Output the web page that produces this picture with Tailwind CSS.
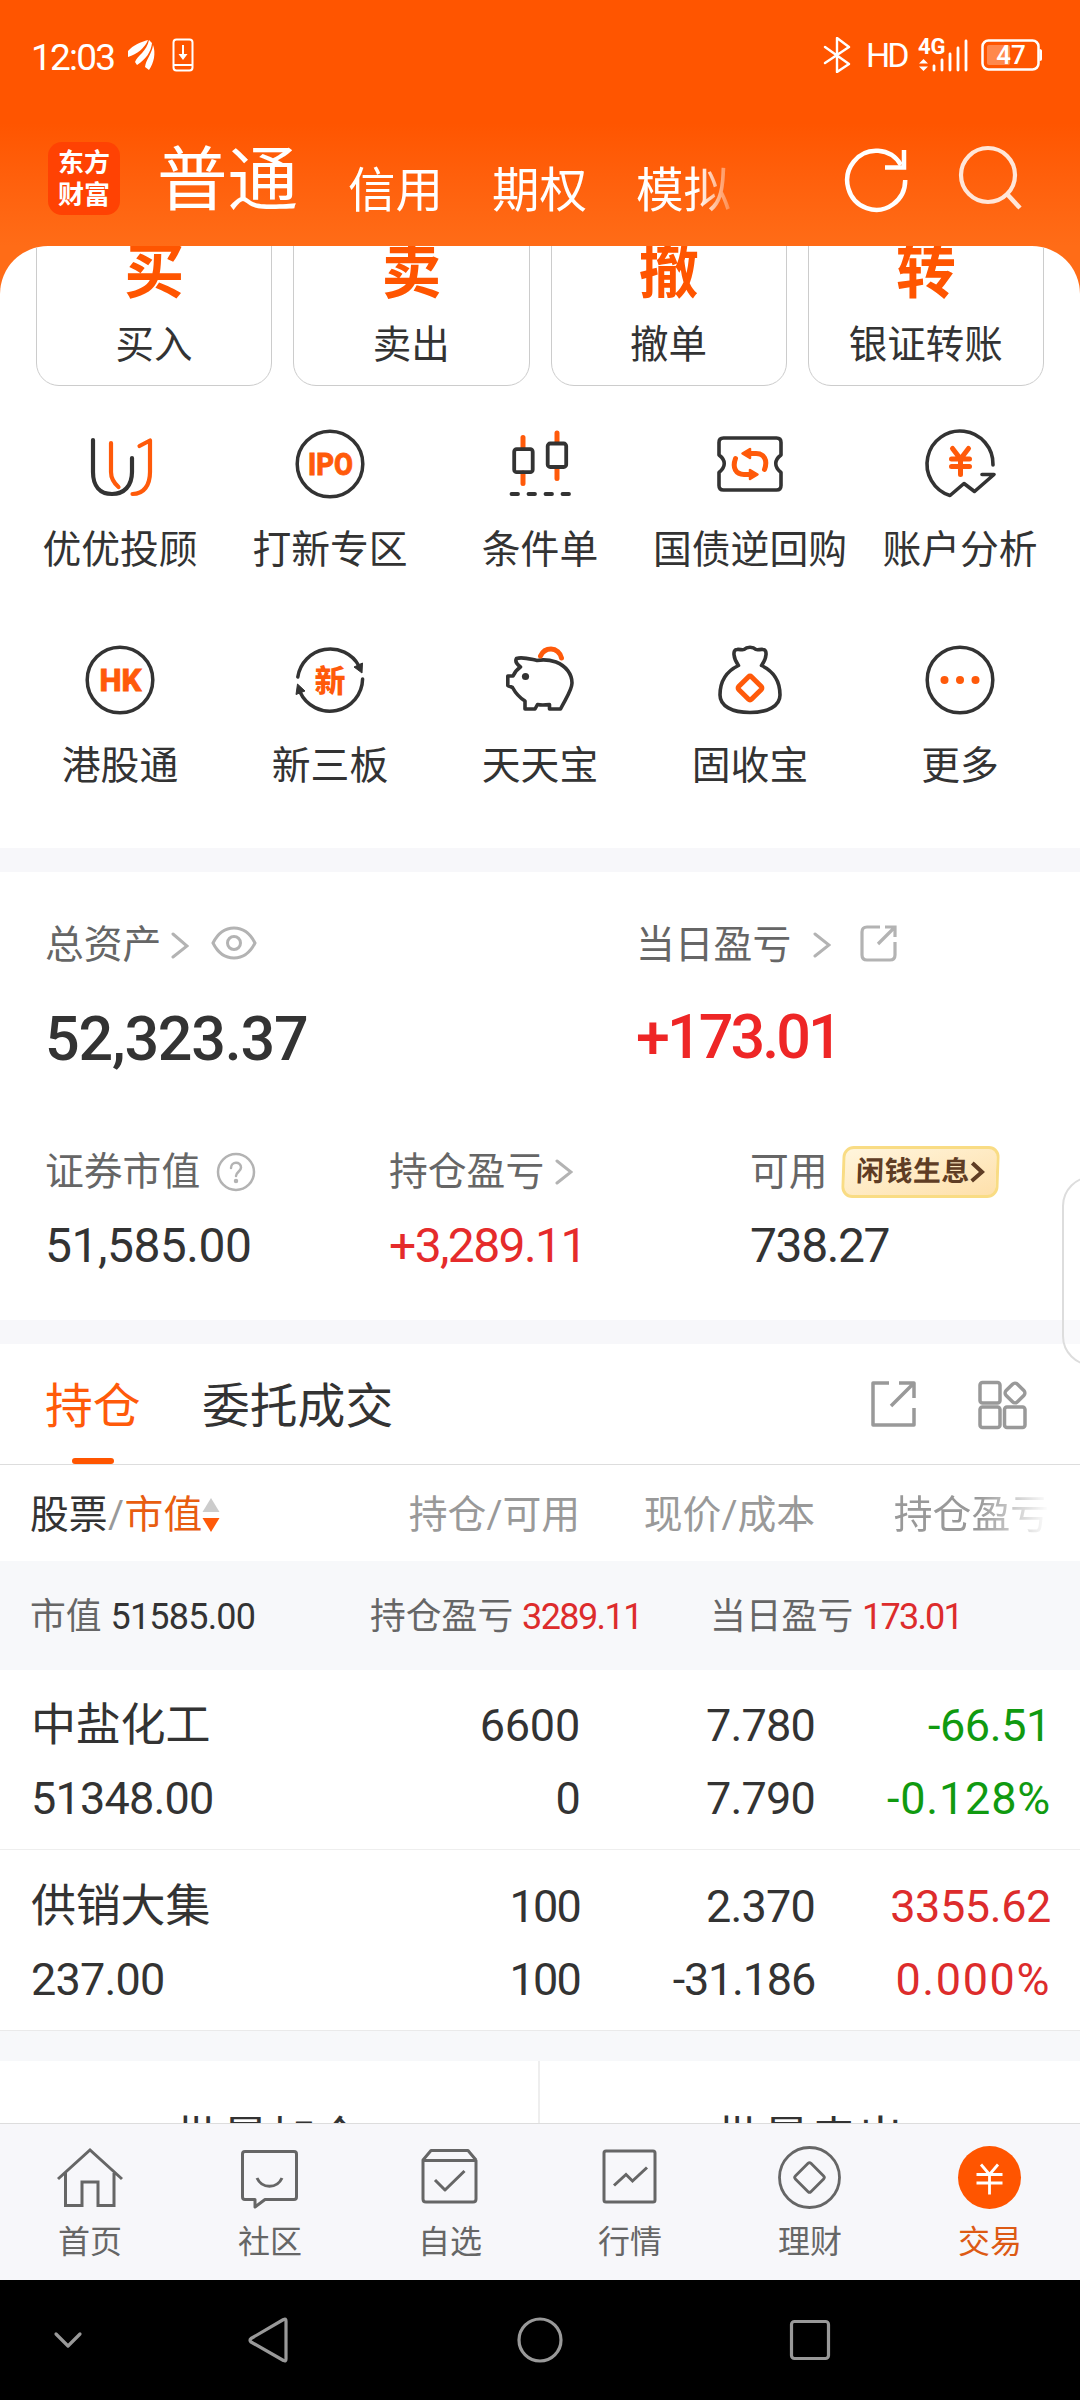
<!DOCTYPE html>
<html lang="zh-CN">
  <head>
    <meta charset="utf-8" />
    <meta name="viewport" content="width=device-width" />
    <title>东方财富 - 交易</title>
    <script src="https://cdn.jsdelivr.net/npm/@tailwindcss/browser@4"></script>
    <style>
      body {
        font-family: Roboto, "Noto Sans CJK SC", sans-serif;
      }
      svg {
        flex-shrink: 0;
      }
    </style>
  </head>
  <body class="bg-white">
    <div
      class="relative w-[1080px] h-[2400px] overflow-hidden flex flex-col text-[#333] whitespace-nowrap"
    >
      <!-- header: status bar + account tabs -->
      <header
        class="h-[246px] shrink-0 bg-linear-to-b from-[#ff5500] from-50% to-[#ff6c17] to-100% text-white"
      >
        <div class="h-[114px] flex items-center pl-[31px] pr-[38px]">
          <div class="w-[97px] text-[37px] leading-none tracking-[-1.8px]">12:03</div>
          <svg class="-mt-1" width="28" height="32" viewBox="0 0 28 32" fill="#fff">
            <path d="M0 12C5 6 13 3 20 1C17 9 9 15 0 18Z" />
            <path d="M7 23C9 17 19 12 21 1L24 4C23 13 18 20 9 26Z" />
            <path d="M17 28C18 20 24 15 25 6C28 14 26 24 21 31Z" />
          </svg>
          <svg class="ml-[16px] -mt-1" width="22" height="34" viewBox="0 0 22 34" fill="none" stroke="#fff">
            <rect x="1.5" y="1.5" width="19" height="31" rx="3" stroke-width="2" />
            <path d="M2 27H20" stroke-width="2" />
            <path d="M11 7V17" stroke-width="2" />
            <path d="M6.500 16H15.500L11 22Z" fill="#fff" stroke="none" />
          </svg>
          <div class="flex-1"></div>
          <svg class="-mt-1" width="28" height="36" viewBox="0 0 28 36" fill="none" stroke="#fff" stroke-width="2.400" stroke-linejoin="round" stroke-linecap="round">
            <path d="M2 10L26 27L14 35V1L26 10L2 26" />
          </svg>
          <div class="-mt-1 ml-[15px] w-[52px] text-[34px] leading-none tracking-[-3px]">HD</div>
          <div class="relative -mt-1 w-[50px] h-[36px] mr-[13px]">
            <span class="absolute left-0 -top-[1px] text-[22px] leading-none font-bold">4G</span>
            <svg class="absolute inset-0" width="50" height="36" viewBox="0 0 50 36" fill="none" stroke="#fff" stroke-width="3" stroke-linecap="round">
              <path d="M1 26.500L5.500 22L10 26.500ZM1 29.500L5.500 34L10 29.500Z" fill="#fff" stroke="none" />
              <path d="M16 29V33M24 23V33M32 17V33M40 11V33M48 4V33" stroke-width="2.800" />
            </svg>
          </div>
          <div class="relative -mt-1 w-[61px] h-[32px]">
            <svg class="absolute inset-0" width="61" height="32" viewBox="0 0 61 32" fill="none">
              <rect x="1.500" y="1.500" width="56" height="29" rx="6" stroke="#fff" stroke-width="2.500" />
              <rect x="6" y="6" width="23" height="20" rx="2" fill="#fff" fill-opacity=".3" />
              <path d="M58.500 10V22C60.500 22 61 21 61 20V12C61 11 60.500 10 58.500 10Z" fill="#fff" />
            </svg>
            <span class="absolute inset-0 pr-[1px] text-center text-[26px] leading-[33px] font-medium">47</span>
          </div>
        </div>
        <div class="h-[132px] flex items-start pl-[48px]">
          <div
            class="mt-[28px] w-[72px] h-[73px] rounded-[14px] bg-[#ff4203] pt-[3px] text-center text-[26px] leading-[32px] font-bold"
            style="font-family: 'Noto Sans CJK SC', sans-serif"
          >
            东方<br />财富
          </div>
          <div class="ml-[37px] mt-[31px] w-[141px] text-[70.500px] leading-[72px]">普通</div>
          <div
            class="ml-[50px] mt-[49px] w-[393px] flex gap-[49px] text-[47.500px] leading-[56px] mask-r-from-89% mask-r-to-100%"
          >
            <span>信用</span><span>期权</span><span>模拟</span>
          </div>
          <svg class="ml-[103px] mt-[29px]" width="66" height="72" viewBox="0 0 66 72" fill="none" stroke="#fff" stroke-width="4.500">
            <path d="M61.200 37A29 29.500 0 1 1 57 22" />
            <path d="M60 7V24.500H41" />
          </svg>
          <svg class="ml-[47px] mt-[30px]" width="66" height="68" viewBox="0 0 66 68" fill="none" stroke="#ffe6d9" stroke-width="4.200">
            <circle cx="31" cy="31" r="27" />
            <path d="M50 50L63 64" stroke-width="4.500" />
          </svg>
        </div>
      </header>

      <main class="h-[1877px] shrink-0 overflow-hidden bg-[#ff6c17] flex flex-col">
        <!-- scrolled sheet -->
        <section class="h-[602px] shrink-0 bg-white rounded-t-[48px] overflow-hidden">
          <div class="h-[141px] grid grid-cols-4 gap-[21px] pl-[36px] pr-[36px] text-center">
            <div class="h-[190px] -mt-[50px] border border-[#ccc] rounded-[23px] pt-[38px]">
              <div class="text-[60px] leading-[76px] font-bold text-[#ff5500]">买</div>
              <div class="mt-[7px] text-[38.500px] leading-[54px]">买入</div>
            </div>
            <div class="h-[190px] -mt-[50px] border border-[#ccc] rounded-[23px] pt-[38px]">
              <div class="text-[60px] leading-[76px] font-bold text-[#ff5500]">卖</div>
              <div class="mt-[7px] text-[38.500px] leading-[54px]">卖出</div>
            </div>
            <div class="h-[190px] -mt-[50px] border border-[#ccc] rounded-[23px] pt-[38px]">
              <div class="text-[60px] leading-[76px] font-bold text-[#ff5500]">撤</div>
              <div class="mt-[7px] text-[38.500px] leading-[54px]">撤单</div>
            </div>
            <div class="h-[190px] -mt-[50px] border border-[#ccc] rounded-[23px] pt-[38px]">
              <div class="text-[60px] leading-[76px] font-bold text-[#ff5500]">转</div>
              <div class="mt-[7px] text-[38.500px] leading-[54px]">银证转账</div>
            </div>
          </div>

          <!-- shortcuts -->
          <div class="mt-[37px] px-[15px] grid grid-cols-5 auto-rows-[216px] text-[38.800px] leading-[54px]">
            <div class="flex flex-col items-center gap-[19px]">
              <svg width="80" height="80" viewBox="0 0 80 80" fill="none" stroke-width="4.200" stroke-linecap="round" stroke-linejoin="round">
                <path stroke="#333" d="M13 16V48C13 62 20 70 32 70S52 62 52 48V34" />
                <path stroke="#ff5a0a" d="M31 19V48C31 55 34 59 38.500 63M59.500 22L70 16.500V48C70 61 64 70 52.500 70" />
              </svg>
              <span>优优投顾</span>
            </div>
            <div class="flex flex-col items-center gap-[19px]">
              <svg width="80" height="80" viewBox="0 0 80 80" fill="none">
                <circle cx="40" cy="40" r="32.800" stroke="#333" stroke-width="3.500" />
                <text x="40.500" y="51.300" text-anchor="middle" font-size="31" font-weight="800" fill="#ff5a0a" textLength="45" lengthAdjust="spacingAndGlyphs" stroke="#ff5a0a" stroke-width=".8">IPO</text>
              </svg>
              <span>打新专区</span>
            </div>
            <div class="flex flex-col items-center gap-[19px]">
              <svg width="80" height="80" viewBox="0 0 80 80" fill="none" stroke="#333" stroke-width="3.800" stroke-linecap="round">
                <path stroke="#ff5a0a" stroke-width="5" d="M23 13.500V24M23 49V59.500M57 9V18M57 45V54.500" />
                <rect x="14.200" y="25.200" width="18.500" height="23" rx="2.500" />
                <rect x="47.700" y="19.500" width="18.500" height="23.500" rx="2.500" />
                <path d="M11.500 70H18M28.500 70H35M45.500 70H52M62.500 70H69" />
              </svg>
              <span>条件单</span>
            </div>
            <div class="flex flex-col items-center gap-[19px]">
              <svg width="80" height="80" viewBox="0 0 80 80" fill="none" stroke="#333" stroke-width="3.600" stroke-linejoin="round">
                <path d="M13.500 14H66.500Q71 14 71 18.500V31C64 36 64 43 71 48.500V61.500Q71 66 66.500 66H13.500Q9 66 9 61.500V48.500C16 43 16 36 9 31V18.500Q9 14 13.500 14Z" />
                <g stroke="#ff5a0a" stroke-width="5" stroke-linecap="round">
                  <path d="M54.500 45.500C58 36 54 29.500 46 29.500H40M25.500 34.500C22 44 26 50.500 34 50.500H40" />
                  <path d="M32.500 29.500L40 25V34ZM47.500 50.500L40 46V55Z" fill="#ff5a0a" stroke-width="2.500" />
                </g>
              </svg>
              <span>国债逆回购</span>
            </div>
            <div class="flex flex-col items-center gap-[19px]">
              <svg width="80" height="80" viewBox="0 0 80 80" fill="none" stroke="#333" stroke-width="3.600" stroke-linecap="round" stroke-linejoin="round">
                <path d="M73 41A33 33 0 1 0 30 71.500L44 59.500L54.500 67.500L74 50.500H62" />
                <path stroke="#ff5a0a" stroke-width="5" d="M32.500 24.500L40.500 35L48.500 24.500M31.500 35H49.500M31.500 42.500H49.500M40.500 35V50.500" />
              </svg>
              <span>账户分析</span>
            </div>
            <div class="flex flex-col items-center gap-[19px]">
              <svg width="80" height="80" viewBox="0 0 80 80" fill="none">
                <circle cx="40" cy="40" r="32.800" stroke="#333" stroke-width="3.500" />
                <text x="40.500" y="51.300" text-anchor="middle" font-size="31" font-weight="800" fill="#ff5a0a" textLength="42" lengthAdjust="spacingAndGlyphs" stroke="#ff5a0a" stroke-width=".8">HK</text>
              </svg>
              <span>港股通</span>
            </div>
            <div class="flex flex-col items-center gap-[19px]">
              <svg width="80" height="80" viewBox="0 0 80 80" fill="none">
                <path d="M7.800 37A32.800 32.800 0 0 1 69 26M72.600 39A32.800 32.800 0 0 1 10 52" stroke="#333" stroke-width="3.500" stroke-linecap="round" />
                <path d="M64 27L72.500 23L72 33ZM7.500 44L6 54.500L15 51Z" fill="#333" stroke="#333" />
                <text x="40" y="51.500" text-anchor="middle" font-size="31" font-weight="900" fill="#ff5a0a">新</text>
              </svg>
              <span>新三板</span>
            </div>
            <div class="flex flex-col items-center gap-[19px]">
              <svg width="80" height="80" viewBox="0 0 80 80" fill="none" stroke="#333" stroke-width="3.600" stroke-linejoin="round">
                <path d="M20.500 27C16.500 24 15 21 16.500 18.500C22 16.500 28 18.500 37 20.500C42 19.500 50 20 56 22C66 26 72 34 72 43C72 50 66 58 60.500 69H49.500V64.500Q42 65.500 37.500 64.500L35 69H25V61C18.500 57 15.500 53 12.500 47.500L7.800 45.500V36H13C15 31.500 17.500 29 20.500 27Z" />
                <circle cx="25.500" cy="36.500" r="3.600" fill="#333" stroke="none" />
                <path d="M40.500 16C43 10.500 46.500 9 51 9C56 9 60.500 13 61.500 18" stroke="#ff5a0a" stroke-width="5" stroke-linecap="round" />
              </svg>
              <span>天天宝</span>
            </div>
            <div class="flex flex-col items-center gap-[19px]">
              <svg width="80" height="80" viewBox="0 0 80 80" fill="none" stroke="#333" stroke-width="3.600" stroke-linejoin="round">
                <path d="M28.500 25.500C23 18 22.500 9.500 27 9.500C30 9 32 10.500 34 9.500C37 6.500 43 6.500 46 9.500C48 10.500 50 9 53 9.500C57.500 9.500 57 18 51.500 25.500C63 31 70 41 70 55C70 66 58 72.500 40 72.500S10 66 10 55C10 41 17 31 28.500 25.500Z" />
                <rect x="31" y="39" width="18" height="18" rx="2" transform="rotate(45 40 48)" stroke="#ff5a0a" stroke-width="5" />
              </svg>
              <span>固收宝</span>
            </div>
            <div class="flex flex-col items-center gap-[19px]">
              <svg width="80" height="80" viewBox="0 0 80 80" fill="#ff5a0a">
                <circle cx="40" cy="40" r="32.800" fill="none" stroke="#333" stroke-width="3.500" />
                <circle cx="24.500" cy="40" r="4" /><circle cx="40" cy="40" r="4" /><circle cx="55.500" cy="40" r="4" />
              </svg>
              <span>更多</span>
            </div>
          </div>
        </section>

        <!-- assets -->
        <section class="h-[496px] shrink-0 bg-white border-y-[24px] border-[#f7f7fa] pl-[45px]">
          <div class="pt-[45px] flex">
            <div class="w-[591px]">
              <div class="h-[56px] flex items-center text-[38.800px] leading-[56px] text-[#666]">
                总资产
                <svg class="ml-[10px]" width="18" height="28" viewBox="0 0 18 28" fill="none" stroke="#b3b3b3" stroke-width="3" stroke-linecap="round"><path d="M2 3L16 15L2 26" /></svg>
                <svg class="ml-[22px] -mt-1" width="46" height="34" viewBox="0 0 46 34" fill="none" stroke="#b3b3b3" stroke-width="3"><path d="M2 17C12 -3 34 -3 44 17C34 37 12 37 2 17Z" /><circle cx="23" cy="17" r="6.500" /></svg>
              </div>
              <div class="mt-[30px] text-[61px] leading-[72px] font-medium tracking-[-1.200px]">52,323.37</div>
            </div>
            <div>
              <div class="h-[56px] flex items-center text-[38.800px] leading-[56px] text-[#666]">
                当日盈亏
                <svg class="ml-[22px]" width="18" height="28" viewBox="0 0 18 28" fill="none" stroke="#b3b3b3" stroke-width="3" stroke-linecap="round"><path d="M2 3L16 14L2 25" /></svg>
                <svg class="ml-[28px] -mt-[4px]" width="38" height="38" viewBox="0 0 38 38" fill="none" stroke="#b3b3b3" stroke-width="3.200"><path d="M21 3H8Q3 3 3 8V31Q3 36 8 36H31Q36 36 36 31V18M26 3H36V13M36 3L19 20" /></svg>
              </div>
              <div class="mt-[28px] text-[61px] leading-[72px] font-medium tracking-[-2.900px] text-[#ee2626]">+173.01</div>
            </div>
          </div>
          <div class="pt-[69px] flex">
            <div class="w-[344px]">
              <div class="h-[56px] flex items-center text-[38.800px] leading-[56px] text-[#666]">
                证券市值
                <svg class="ml-[16px]" width="40" height="40" viewBox="0 0 40 40" fill="none" stroke="#b3b3b3" stroke-width="2.500" stroke-linecap="round"><circle cx="20" cy="20" r="18" /><path d="M15 16C15 9 25 9 25 15.500C25 19.500 20 20 20 24" /><circle cx="20" cy="29" r="1" fill="#b3b3b3" /></svg>
              </div>
              <div class="mt-[16px] text-[48px] leading-[60px] tracking-[-0.500px]">51,585.00</div>
            </div>
            <div class="w-[361px]">
              <div class="h-[56px] flex items-center text-[38.800px] leading-[56px] text-[#666]">
                持仓盈亏
                <svg class="ml-[11px]" width="18" height="28" viewBox="0 0 18 28" fill="none" stroke="#b3b3b3" stroke-width="3" stroke-linecap="round"><path d="M2 3L16 14L2 25" /></svg>
              </div>
              <div class="mt-[16px] text-[48px] leading-[60px] tracking-[-1.600px] text-[#e52b2b]">+3,289.11</div>
            </div>
            <div>
              <div class="h-[56px] flex items-center text-[38.800px] leading-[56px] text-[#666]">
                可用
                <div class="ml-[14px] w-[157px] h-[52px] -skew-x-2 rounded-[11px] border-[3px] border-[#f9dc84] bg-linear-to-br from-[#fff5dc] to-[#fee0ab] flex items-center justify-center text-[28px] font-bold tracking-[0.500px] text-[#5f3d24]">
                  闲钱生息
                  <svg width="15" height="22" viewBox="0 0 15 22" fill="none" stroke="#5f3d24" stroke-width="4"><path d="M2 2L12 11L2 20" /></svg>
                </div>
              </div>
              <div class="mt-[16px] text-[48px] leading-[60px] tracking-[-1.400px]">738.27</div>
            </div>
          </div>
        </section>

        <!-- holdings -->
        <section class="shrink-0 bg-white">
          <div class="h-[121px] border-b border-[#ddd] flex pl-[45px] text-[47.800px] leading-[126px]">
            <div class="relative w-[96px] text-[#ff5a0a]">
              持仓
              <i class="absolute left-[27px] bottom-0 w-[42px] h-[6px] rounded-full bg-[#ff5500]"></i>
            </div>
            <div class="ml-[61px] w-[666px]">委托成交</div>
            <svg class="mt-[35px]" width="50" height="50" viewBox="0 0 50 50" fill="none" stroke="#999" stroke-width="3.500"><path d="M21 4H5V46H46V29M31 4H46V19M46 4L23 27" stroke-linejoin="round" /></svg>
            <svg class="ml-[58px] mt-[35px]" width="54" height="54" viewBox="0 0 54 54" fill="none" stroke="#999" stroke-width="3.500"><rect x="4" y="3.500" width="20" height="20.500" rx="2.500" /><rect x="4" y="28" width="20" height="20.500" rx="2.500" /><rect x="28.500" y="28" width="20.500" height="20.500" rx="2.500" /><rect x="31" y="6" width="16" height="16" rx="3.500" transform="rotate(45 39 14)" /></svg>
          </div>
          <div class="h-[96px] pt-[3px] pl-[30px] pr-[31px] grid grid-cols-[290px_260px_235px_234px] items-center text-right text-[38.800px] leading-[56px] text-[#999]">
            <div class="flex items-center text-[#333]">
              股票<span class="w-[17px] text-center text-[#999]">/</span><span class="text-[#e85d10]">市值</span>
              <svg width="18" height="36" viewBox="0 0 18 36"><path d="M9 1L17.500 15H.5Z" fill="#ccc" /><path d="M9 35L17.500 21H.5Z" fill="#ff5a0a" /></svg>
            </div>
            <div>持仓/可用</div>
            <div>现价/成本</div>
            <div class="mask-r-from-70% mask-r-to-100%">持仓盈亏</div>
          </div>
          <div class="h-[109px] pt-[2px] px-[30px] bg-[#f7f8fa] flex items-center text-[35.800px] leading-[56px] text-[#666]">
            <div class="w-[340px]">市值 <span class="text-[36px] tracking-[-0.800px] text-[#333]">51585.00</span></div>
            <div class="w-[340px]">持仓盈亏 <span class="text-[36px] tracking-[-1.600px] text-[#dd2c2c]">3289.11</span></div>
            <div>当日盈亏 <span class="text-[36px] tracking-[-1.800px] text-[#dd2c2c]">173.01</span></div>
          </div>
          <div class="h-[180px] border-b border-[#eee] pl-[31px] pr-[29px] pt-[21px] grid grid-cols-[289px_260px_235px_236px] auto-rows-[73px] text-right text-[45px] leading-[70px] tracking-[-0.800px]">
            <div class="text-left tracking-[-0.200px]">中盐化工</div>
            <div class="tracking-[-0.200px]">6600</div>
            <div>7.780</div>
            <div class="tracking-[-0.400px] text-[#109a10]">-66.51</div>
            <div class="text-left">51348.00</div>
            <div>0</div>
            <div>7.790</div>
            <div class="tracking-[0.800px] text-[#109a10]">-0.128%</div>
          </div>
          <div class="h-[181px] border-b border-[#eaeaea] pl-[31px] pr-[29px] pt-[22px] grid grid-cols-[289px_260px_235px_236px] auto-rows-[73px] text-right text-[45px] leading-[70px] tracking-[-0.800px]">
            <div class="text-left tracking-[-0.200px]">供销大集</div>
            <div class="tracking-[-1.800px]">100</div>
            <div>2.370</div>
            <div class="tracking-[-0.400px] text-[#dd2c2c]">3355.62</div>
            <div class="text-left">237.00</div>
            <div class="tracking-[-1.800px]">100</div>
            <div class="tracking-[-1.200px]">-31.186</div>
            <div class="tracking-[1.600px] text-[#dd2c2c]">0.000%</div>
          </div>
        </section>

        <!-- batch actions, cut by the tab bar -->
        <section class="h-[92px] shrink-0 overflow-hidden bg-white border-t-[30px] border-[#f7f8fa] grid grid-cols-2 text-center text-[47px] leading-[60px]">
          <div class="h-[100px] border-r-2 border-[#eee] pt-[48px]">批量加仓</div>
          <div class="h-[100px] pt-[48px]">批量卖出</div>
        </section>
      </main>

      <!-- tab bar -->
      <nav class="h-[157px] shrink-0 border-t border-[#ddd] bg-[#f7f7fa] pt-[18px] grid grid-cols-6 text-[32px] leading-[44px] text-[#666]">
        <div class="flex flex-col items-center gap-[8px]">
          <svg width="70" height="70" viewBox="0 0 70 70" fill="none" stroke="#666" stroke-width="3"><path d="M3 37L35 8L67 37M10.500 31V63.500H27V40H43V63.500H59V31" /></svg>
          <span>首页</span>
        </div>
        <div class="flex flex-col items-center gap-[8px]">
          <svg width="70" height="70" viewBox="0 0 70 70" fill="none" stroke="#666" stroke-width="3" stroke-linejoin="round"><path d="M10 9.500H59Q61.500 9.500 61.500 12V55Q61.500 57.500 59 57.500H30L20 65V57.500H10Q7.500 57.500 7.500 55V12Q7.500 9.500 10 9.500Z" /><path d="M22 36C27 47 42 47 47 36" /></svg>
          <span>社区</span>
        </div>
        <div class="flex flex-col items-center gap-[8px]">
          <svg width="70" height="70" viewBox="0 0 70 70" fill="none" stroke="#666" stroke-width="3" stroke-linejoin="round"><path d="M8 18.500H61V57Q61 60 58 60H11Q8 60 8 57V18L16 8.500H53L61 18" /><path d="M20 38L30 48L49.500 29" /></svg>
          <span>自选</span>
        </div>
        <div class="flex flex-col items-center gap-[8px]">
          <svg width="70" height="70" viewBox="0 0 70 70" fill="none" stroke="#666" stroke-width="3"><rect x="9" y="9" width="51" height="51" rx="2" /><path d="M19 43.500L31 32.500L37.500 39L52 25.500" /></svg>
          <span>行情</span>
        </div>
        <div class="flex flex-col items-center gap-[8px]">
          <svg width="70" height="70" viewBox="0 0 70 70" fill="none" stroke="#666" stroke-width="2.800"><circle cx="34.500" cy="35.500" r="30" /><rect x="23.500" y="24.500" width="22" height="22" rx="2" transform="rotate(45 34.500 35.500)" /></svg>
          <span>理财</span>
        </div>
        <div class="flex flex-col items-center gap-[8px] text-[#dd5a14]">
          <svg width="70" height="70" viewBox="0 0 70 70" fill="none"><circle cx="34.500" cy="35.500" r="31.500" fill="#ff5500" /><path d="M26 22.500L34.500 32.500L43 22.500M21.500 32.500H47.500M21.500 41H47.500M34.500 32V52.500" stroke="#fff" stroke-width="2.800" /></svg>
          <span>交易</span>
        </div>
      </nav>

      <!-- system navigation -->
      <div class="h-[120px] shrink-0 bg-black flex items-center">
        <svg width="1080" height="120" viewBox="0 0 1080 120" fill="none" stroke="#999" stroke-width="3.200" stroke-linecap="round" stroke-linejoin="round">
          <path d="M56 54L68 66L80 54" />
          <path d="M283.500 39.500Q286 38 286 41V79Q286 82 283.500 80.500L251 62Q249 60 251 58.500Z" />
          <circle cx="540" cy="60" r="21" />
          <rect x="791.500" y="41.500" width="37" height="37" rx="3" />
        </svg>
      </div>

      <!-- edge panel handle -->
      <div class="absolute left-[1062px] top-[1176px] w-[60px] h-[190px] rounded-[30px] border-2 border-[#ddd] bg-white/30"></div>
    </div>
  </body>
</html>
